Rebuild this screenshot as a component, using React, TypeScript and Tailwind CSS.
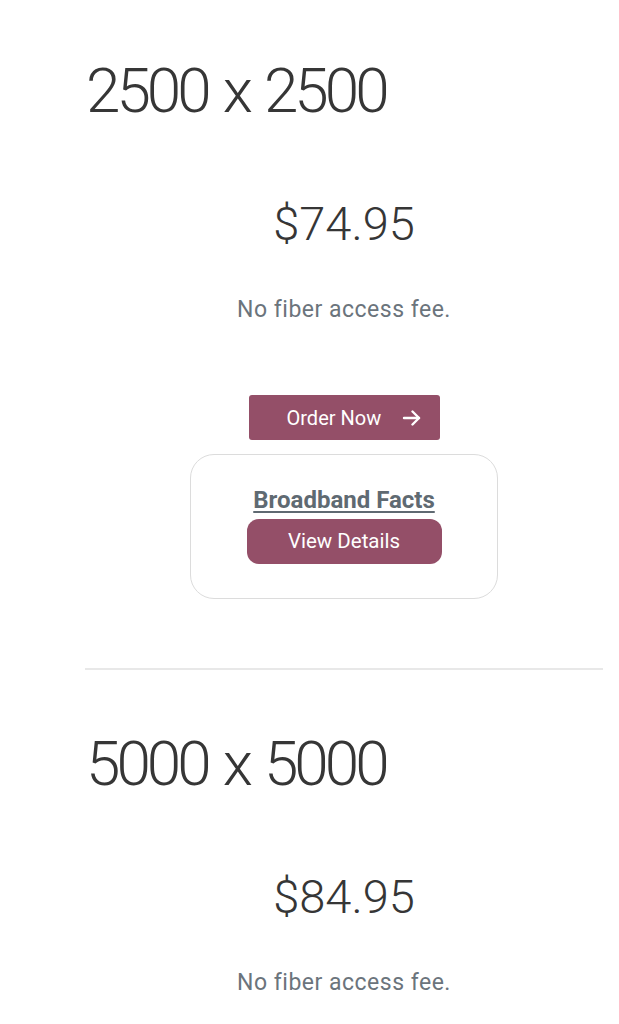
import React from "react";

const font = { fontFamily: "Roboto, 'Liberation Sans', sans-serif" };

function Arrow() {
  return (
    <svg width="19" height="16" viewBox="0 0 19 16" fill="none" stroke="white" strokeWidth="2.4" strokeLinecap="round" strokeLinejoin="round">
      <path d="M2 8h15" />
      <path d="M10.5 1.5L17 8l-6.5 6.5" />
    </svg>
  );
}

function Plan({ title, price, details }: { title: string; price: string; details: boolean }) {
  return (
    <div className="flex flex-col">
      <h2 className="text-[62px] leading-[62px] font-light tracking-[-4px] [word-spacing:4px] text-[#363636] pl-[1px]">{title}</h2>
      <div className="mt-[78px] text-center text-[47px] leading-[47px] font-light text-[#363636]">{price}</div>
      <div className="mt-[51px] text-center text-[23px] leading-[23px] tracking-[0.5px] text-[#6b747c]">No fiber access fee.</div>
      {details && (
        <>
          <div className="mt-[74px] flex justify-center">
            <button className="flex h-[45px] w-[191px] items-center rounded-[3px] bg-[#944f68] pl-[38px] text-[20px] text-white">
              <span>Order Now</span>
              <span className="ml-[21px] flex items-center"><Arrow /></span>
            </button>
          </div>
          <div className="mt-[14px] flex justify-center">
            <div className="flex w-[308px] flex-col items-center rounded-[24px] border border-[#dcdcdc] pt-[33px] pb-[34px]">
              <a className="text-[24px] leading-[24px] font-bold text-[#5f6a72] underline underline-offset-[3px]">Broadband Facts</a>
              <button className="mt-[7px] h-[45px] w-[195px] rounded-[12px] bg-[#944f68] text-[20.5px] text-white">View Details</button>
            </div>
          </div>
          <div className="mt-[69px] h-[2px] bg-[#e8e8e8]" />
        </>
      )}
    </div>
  );
}

export default function App() {
  return (
    <div className="min-h-[1024px] bg-white" style={font}>
      <div className="ml-[85px] w-[518px] pt-[60px]">
        <Plan title="2500 x 2500" price="$74.95" details />
        <div className="mt-[63px]">
          <Plan title="5000 x 5000" price="$84.95" details={false} />
        </div>
      </div>
    </div>
  );
}
